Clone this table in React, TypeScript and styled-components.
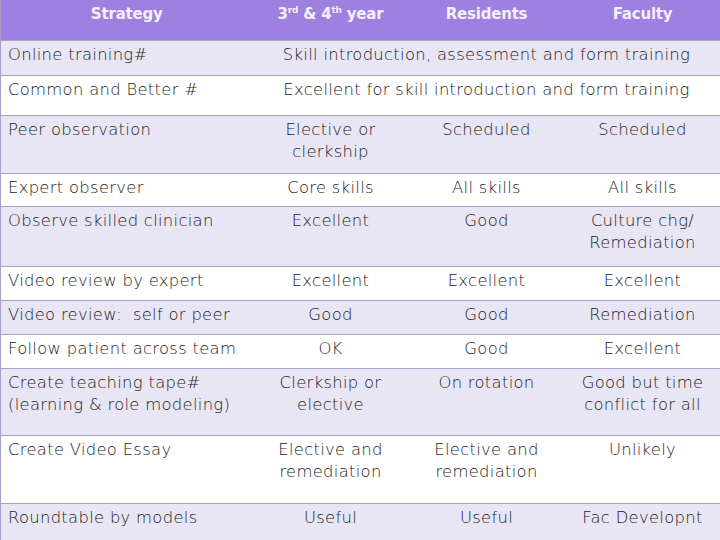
import React from 'react';
import styled, { createGlobalStyle } from 'styled-components';

const GlobalStyle = createGlobalStyle`
  html, body {
    margin: 0;
    padding: 0;
    background: #ffffff;
  }
  body {
    font-family: "DejaVu Sans", "Liberation Sans", sans-serif;
    color: #1c1c1c;
  }
`;

const Table = styled.table`
  width: 720px;
  height: 540px;
  border-collapse: collapse;
  table-layout: fixed;
  border-left: 1px solid #a99fca;
`;

const HeadRow = styled.tr`
  height: 40px;
  background: #9d80e0;
`;

const HeadCell = styled.th`
  padding: 3px 4px 0;
  vertical-align: top;
  text-align: center;
  color: #f4f0ff;
  font-size: 15px;
  font-weight: bold;
  line-height: 22px;
  letter-spacing: -0.2px;

  sup {
    font-size: 9px;
    line-height: 0;
  }
`;

const Row = styled.tr<{ $shade: boolean; $h: number }>`
  height: ${({ $h }) => $h}px;
  background: ${({ $shade }) => ($shade ? '#e8e5f4' : '#ffffff')};
  border-top: 1px solid #a99fca;
`;

const Cell = styled.td<{ $left?: boolean }>`
  padding: 3px 4px 0 ${({ $left }) => ($left ? '7px' : '4px')};
  vertical-align: top;
  text-align: ${({ $left }) => ($left ? 'left' : 'center')};
  font-size: 16.4px;
  font-weight: 200;
  letter-spacing: 0.3px;
  line-height: 22px;
  white-space: pre-wrap;
`;

type Line = {
  strategy: string;
  cells: string[];
  h: number;
};

const rows: Line[] = [
  { strategy: 'Online training#', cells: ['Skill introduction, assessment and form training'], h: 35 },
  { strategy: 'Common and Better #', cells: ['Excellent for skill introduction and form training'], h: 40 },
  { strategy: 'Peer observation', cells: ['Elective or\nclerkship', 'Scheduled', 'Scheduled'], h: 58 },
  { strategy: 'Expert observer', cells: ['Core skills', 'All skills', 'All skills'], h: 33 },
  { strategy: 'Observe skilled clinician', cells: ['Excellent', 'Good', 'Culture chg/\nRemediation'], h: 60 },
  { strategy: 'Video review by expert', cells: ['Excellent', 'Excellent', 'Excellent'], h: 34 },
  { strategy: 'Video review:  self or peer', cells: ['Good', 'Good', 'Remediation'], h: 34 },
  { strategy: 'Follow patient across team', cells: ['OK', 'Good', 'Excellent'], h: 34 },
  {
    strategy: 'Create teaching tape#\n(learning & role modeling)',
    cells: ['Clerkship or\nelective', 'On rotation', 'Good but time\nconflict for all'],
    h: 67,
  },
  {
    strategy: 'Create Video Essay',
    cells: ['Elective and\nremediation', 'Elective and\nremediation', 'Unlikely'],
    h: 68,
  },
  { strategy: 'Roundtable by models', cells: ['Useful', 'Useful', 'Fac Developnt'], h: 37 },
];

const App: React.FC = () => {
  return (
    <>
      <GlobalStyle />
      <Table>
        <colgroup>
          <col style={{ width: 252 }} />
          <col style={{ width: 156 }} />
          <col style={{ width: 156 }} />
          <col style={{ width: 156 }} />
        </colgroup>
        <thead>
          <HeadRow>
            <HeadCell>Strategy</HeadCell>
            <HeadCell>
              3<sup>rd</sup> &amp; 4<sup>th</sup> year
            </HeadCell>
            <HeadCell>Residents</HeadCell>
            <HeadCell>Faculty</HeadCell>
          </HeadRow>
        </thead>
        <tbody>
          {rows.map((r, i) => (
            <Row key={r.strategy} $shade={i % 2 === 0} $h={r.h}>
              <Cell $left>{r.strategy}</Cell>
              {r.cells.length === 1 ? (
                <Cell colSpan={3}>{r.cells[0]}</Cell>
              ) : (
                r.cells.map((c, j) => <Cell key={j}>{c}</Cell>)
              )}
            </Row>
          ))}
        </tbody>
      </Table>
    </>
  );
};

export default App;
